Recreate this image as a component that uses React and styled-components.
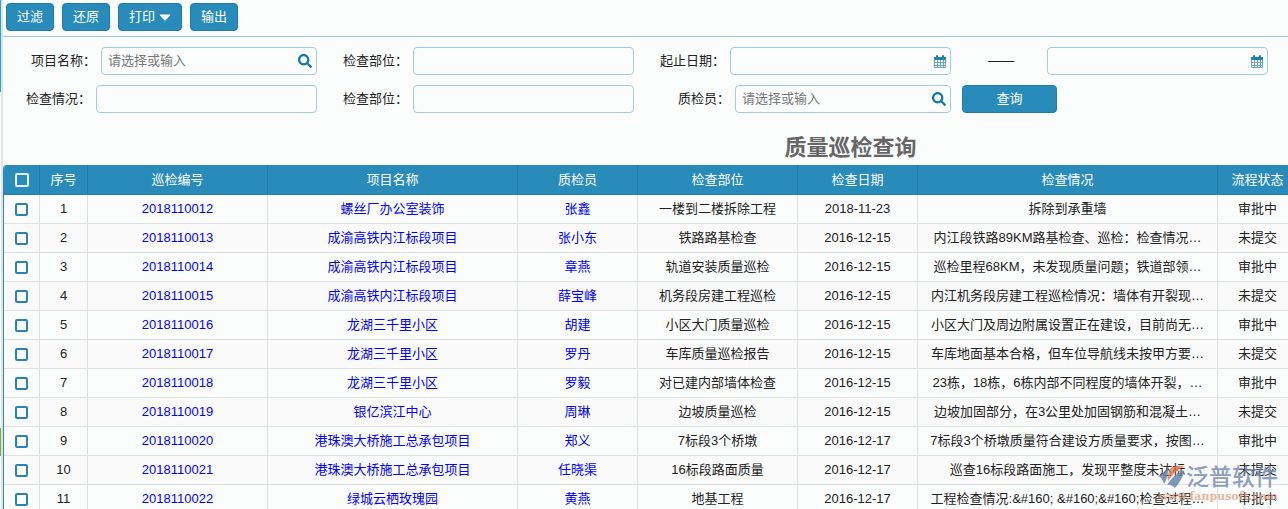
import React from "react";
import styled, { createGlobalStyle } from "styled-components";
import { FaSearch } from "react-icons/fa";

const columns = [
  { title: "序号", width: 48 },
  { title: "巡检编号", width: 180 },
  { title: "项目名称", width: 250 },
  { title: "质检员", width: 120 },
  { title: "检查部位", width: 160 },
  { title: "检查日期", width: 120 },
  { title: "检查情况", width: 300 },
  { title: "流程状态", width: 80 },
];

const rows = [
  ["2018110012", "螺丝厂办公室装饰", "张鑫", "一楼到二楼拆除工程", "2018-11-23", "拆除到承重墙", "审批中"],
  ["2018110013", "成渝高铁内江标段项目", "张小东", "铁路路基检查", "2016-12-15", "内江段铁路89KM路基检查、巡检：检查情况…", "未提交"],
  ["2018110014", "成渝高铁内江标段项目", "章燕", "轨道安装质量巡检", "2016-12-15", "巡检里程68KM，未发现质量问题；铁道部领…", "审批中"],
  ["2018110015", "成渝高铁内江标段项目", "薛宝峰", "机务段房建工程巡检", "2016-12-15", "内江机务段房建工程巡检情况：墙体有开裂现…", "未提交"],
  ["2018110016", "龙湖三千里小区", "胡建", "小区大门质量巡检", "2016-12-15", "小区大门及周边附属设置正在建设，目前尚无…", "审批中"],
  ["2018110017", "龙湖三千里小区", "罗丹", "车库质量巡检报告", "2016-12-15", "车库地面基本合格，但车位导航线未按甲方要…", "未提交"],
  ["2018110018", "龙湖三千里小区", "罗毅", "对已建内部墙体检查", "2016-12-15", "23栋，18栋，6栋内部不同程度的墙体开裂，…", "审批中"],
  ["2018110019", "银亿滨江中心", "周琳", "边坡质量巡检", "2016-12-15", "边坡加固部分，在3公里处加固钢筋和混凝土…", "未提交"],
  ["2018110020", "港珠澳大桥施工总承包项目", "郑义", "7标段3个桥墩", "2016-12-17", "7标段3个桥墩质量符合建设方质量要求，按图…", "审批中"],
  ["2018110021", "港珠澳大桥施工总承包项目", "任晓渠", "16标段路面质量", "2016-12-17", "巡查16标段路面施工，发现平整度未达标", "未提交"],
  ["2018110022", "绿城云栖玫瑰园", "黄燕", "地基工程", "2016-12-17", "工程检查情况:&#160; &#160;&#160;检查过程…", "审批中"],
];

const CalendarIcon = () => (
  <svg width="12" height="13" viewBox="0 0 12 13" aria-hidden="true">
    <path fill="#1c7fb3" d="M0 2h12v3H0z" />
    <path fill="#fbfdfd" stroke="#1c7fb3" d="M2.5.5h1v3h-1zM8.5.5h1v3h-1z" />
    <path fill="none" stroke="#6fa3c4" d="M.5 4.5v8h11v-8M3.5 5v7M6.5 5v7M9.5 5v7M1 7.5h10M1 10.5h10" />
  </svg>
);

const CaretIcon = () => (
  <svg width="16" height="16" viewBox="0 0 16 16" aria-hidden="true">
    <path fill="currentColor" d="M5.2 5.5h9.6q1 0 .4.8l-4.6 5q-.6.6-1.2 0l-4.6-5q-.6-.8.4-.8z" />
  </svg>
);

const Field = ({ id, label, labelWidth, icon, placeholder }) => (
  <FieldCell $labelWidth={labelWidth}>
    <label htmlFor={id}>{label}</label>
    <InputBox>
      <input id={id} type="text" placeholder={placeholder} />
      {icon}
    </InputBox>
  </FieldCell>
);

const App = () => {
  return (
    <Page>
      <GlobalStyle />
      <SideStrip>
        <StripMark $tone="blue" />
        <StripMark $tone="green" />
      </SideStrip>
      <Main>
        <Toolbar>
          <Button type="button">过滤</Button>
          <Button type="button">还原</Button>
          <Button type="button">
            打印
            <CaretIcon />
          </Button>
          <Button type="button">输出</Button>
        </Toolbar>

        <Filters>
          <Field id="project" label="项目名称：" labelWidth={101} placeholder="请选择或输入" icon={<FaSearch size={14} />} />
          <Field id="part" label="检查部位：" labelWidth={96} />
          <Field id="from" label="起止日期：" labelWidth={96} icon={<CalendarIcon />} />
          <DateTo>
            <label htmlFor="to">——</label>
            <InputBox>
              <input id="to" type="text" />
              <CalendarIcon />
            </InputBox>
          </DateTo>
          <Field id="status" label="检查情况：" labelWidth={96} />
          <Field id="part2" label="检查部位：" labelWidth={96} />
          <Field id="inspector" label="质检员：" labelWidth={101} placeholder="请选择或输入" icon={<FaSearch size={14} />} />
          <SearchCell>
            <Button type="button" $wide>查询</Button>
          </SearchCell>
        </Filters>

        <Title>质量巡检查询</Title>

        <TableWrapper>
          <Table>
            <colgroup>
              <col style={{ width: 36 }} />
              {columns.map((column) => (
                <col key={column.title} style={{ width: column.width }} />
              ))}
            </colgroup>
            <thead>
              <tr>
                <HeadCell>
                  <Checkbox type="checkbox" aria-label="全选" $light />
                </HeadCell>
                {columns.map((column) => (
                  <HeadCell key={column.title}>{column.title}</HeadCell>
                ))}
              </tr>
            </thead>
            <tbody>
              {rows.map(([code, project, person, part, date, detail, state], index) => (
                <Row key={code}>
                  <Cell>
                    <Checkbox type="checkbox" aria-label={code} />
                  </Cell>
                  <Cell>{index + 1}</Cell>
                  <Cell><CellLink href="#">{code}</CellLink></Cell>
                  <Cell><CellLink href="#">{project}</CellLink></Cell>
                  <Cell><CellLink href="#">{person}</CellLink></Cell>
                  <Cell>{part}</Cell>
                  <Cell>{date}</Cell>
                  <Cell>{detail}</Cell>
                  <Cell>{state}</Cell>
                </Row>
              ))}
            </tbody>
          </Table>
        </TableWrapper>
      </Main>

      <Watermark>
        <svg width="28" height="24" viewBox="0 0 28 24" aria-hidden="true">
          <path fill="#5f7fa8" d="M0 11C5 9 8 6 10 1c1 6-1 13-4 18-1-4-3-7-6-8z" />
          <path fill="#dd7a50" d="M12 4C16 0 22 0 27 2c-8 2-11 6-17 14-1-4 0-8 2-12z" />
          <path fill="#5f7fa8" d="M9 20C14 12 19 8 26 6c-1 6-4 11-9 17-2-2-5-4-8-3z" />
        </svg>
        <strong>泛普软件</strong>
        <span>www.fanpusoft.com</span>
      </Watermark>
    </Page>
  );
};

export default App;

const GlobalStyle = createGlobalStyle`
  * {
    box-sizing: border-box;
  }

  html,
  body,
  #root {
    height: 100%;
  }

  body {
    margin: 0;
    overflow: hidden;
    background: #fbfdfd;
    color: #222;
    font: 13px/20px "Liberation Sans", "Noto Sans CJK SC", sans-serif;
  }

  input,
  button {
    font: inherit;
  }
`;

const Page = styled.div`
  position: relative;
  display: flex;
  height: 100%;
  overflow: hidden;
`;

const SideStrip = styled.div`
  display: flex;
  flex: none;
  flex-direction: column;
  justify-content: space-between;
  width: 3px;
  padding-bottom: 53px;
  border-right: 2px solid #e2e4e4;
`;

const StripMark = styled.div`
  height: ${({ $tone }) => ($tone === "blue" ? "92px" : "28px")};
  background: ${({ $tone }) => ($tone === "blue" ? "#2a9fd0" : "#76b02c")};
`;

const Main = styled.div`
  flex: 1;
  min-width: 0;
`;

const Toolbar = styled.div`
  display: flex;
  gap: 8px;
  height: 37px;
  padding: 3px;
  border-bottom: 1px solid #9fc6e0;
`;

const Button = styled.button`
  display: flex;
  align-items: center;
  justify-content: center;
  width: ${({ $wide }) => ($wide ? "95px" : "auto")};
  height: 28px;
  padding: 0 10px;
  border: 1px solid #217ca8;
  border-radius: 4px;
  background: #288bb9;
  color: #fff;
  cursor: pointer;
`;

const Filters = styled.div`
  display: grid;
  grid-template-columns: repeat(4, minmax(0, 1fr));
  gap: 10px 0;
  margin-left: -3px;
  padding: 10px 20px 0 0;
`;

const FieldCell = styled.div`
  display: flex;
  align-items: center;

  label {
    flex: none;
    width: ${({ $labelWidth }) => $labelWidth}px;
    padding-right: 5px;
    text-align: right;
  }
`;

const DateTo = styled(FieldCell)`
  label {
    width: 96px;
    padding: 0 0 0 4px;
    text-align: center;
  }
`;

const InputBox = styled.div`
  display: flex;
  flex: 1;
  align-items: center;
  min-width: 0;
  height: 28px;
  padding: 0 4px 0 6px;
  border: 1px solid #a3c9e3;
  border-radius: 4px;
  color: #1477ad;

  input {
    flex: 1;
    min-width: 0;
    padding: 0;
    border: 0;
    outline: 0;
    background: transparent;
  }

  input::placeholder {
    color: #777;
  }
`;

const SearchCell = styled.div`
  padding-left: 11px;
`;

const Title = styled.h1`
  margin: 19px 0 0;
  padding: 0 0 1px 410px;
  color: #666;
  font-size: 22px;
  line-height: 32px;
  text-align: center;
`;

const TableWrapper = styled.div`
  border-left: 1px solid #288bb9;
  border-radius: 4px 0 0 0;
  overflow: hidden;
`;

const Table = styled.table`
  width: 1294px;
  min-width: 100%;
  table-layout: fixed;
  border-spacing: 0;
`;

const HeadCell = styled.th`
  height: 30px;
  padding: 0;
  border: solid #217ca8;
  border-width: 0 1px 1px 0;
  background: #288bb9;
  color: #fff;
  font-weight: 400;
  text-align: center;
`;

const Row = styled.tr`
  &:nth-child(even) {
    background: #fafafa;
  }
`;

const Cell = styled.td`
  height: 29px;
  padding: 0 8px;
  border: solid #e0e2e2;
  border-width: 0 1px 1px 0;
  overflow: hidden;
  text-align: center;
  text-overflow: ellipsis;
  white-space: nowrap;
`;

const CellLink = styled.a`
  color: #00f;
  text-decoration: none;
`;

const Checkbox = styled.input`
  appearance: none;
  display: block;
  width: ${({ $light }) => ($light ? "14px" : "13px")};
  height: ${({ $light }) => ($light ? "14px" : "13px")};
  margin: 0 auto;
  border: 2px solid ${({ $light }) => ($light ? "#e6f4fa" : "#2a83b5")};
  border-radius: 2px;
`;

const Watermark = styled.div`
  position: absolute;
  right: 10px;
  bottom: 4px;
  display: grid;
  grid-template-columns: auto auto;
  align-items: center;
  justify-content: end;
  color: #7389ad;
  opacity: 0.8;
  pointer-events: none;

  strong {
    font-size: 23px;
    font-weight: 500;
    line-height: 24px;
  }

  span {
    grid-column: 1 / -1;
    color: #e2a48c;
    font: bold 11px/16px "DejaVu Serif", serif;
    text-align: right;
  }
`;
